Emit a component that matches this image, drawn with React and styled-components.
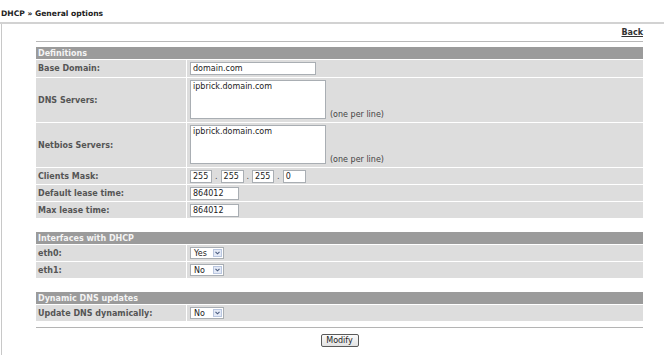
import React from 'react'
import styled, { createGlobalStyle } from 'styled-components'

const GlobalStyle = createGlobalStyle`
  html, body {
    margin: 0;
    padding: 0;
    background: #ffffff;
  }
  body {
    font-family: "DejaVu Sans", Verdana, sans-serif;
    font-size: 8px;
    color: #333333;
  }
`;

const Page = styled.div`
  width: 664px;
  height: 355px;
  overflow: hidden;
`;

const Title = styled.h1`
  margin: 0;
  height: 22px;
  padding: 9px 0 0 1px;
  box-sizing: border-box;
  font-size: 7.6px;
  font-weight: bold;
  color: #222222;
`;

const Frame = styled.div`
  border-top: 2px solid #d2d2d2;
`;

const Content = styled.div`
  margin-left: 1px;
  border-left: 1px solid #c8c8c8;
  padding: 0 21px 20px 34px;
  display: flex;
  flex-direction: column;
`;

const BackBar = styled.div`
  display: flex;
  justify-content: flex-end;
  align-items: center;
  height: 17px;
  border-bottom: 1px solid #b8b8b8;
`;

const BackLink = styled.a`
  font-weight: bold;
  color: #333333;
  text-decoration: underline;
  cursor: pointer;
`;

const Section = styled.div`
  display: grid;
  grid-template-columns: 150px 1fr;
  gap: 1px;
  margin-top: ${({ $top }) => $top}px;
`;

const Header = styled.div`
  grid-column: 1 / -1;
  height: 12px;
  background: #9b9b9b;
  color: #f4f4f4;
  font-weight: bold;
  padding-left: 2px;
  display: flex;
  align-items: center;
`;

const Label = styled.div`
  background: #dddddd;
  height: ${({ $h }) => $h}px;
  padding-left: 2px;
  display: flex;
  align-items: center;
  font-weight: bold;
  color: #555555;
`;

const Value = styled.div`
  background: #dddddd;
  height: ${({ $h }) => $h}px;
  padding-left: 3px;
  display: flex;
  align-items: ${({ $tall }) => ($tall ? 'flex-start' : 'center')};
  padding-top: ${({ $tall }) => ($tall ? 2 : 0)}px;
  box-sizing: border-box;
  gap: 4px;
`;

const MaskGroup = styled.div`
  display: flex;
  align-items: center;
`;

const TextInput = styled.div`
  width: ${({ $w }) => $w}px;
  height: 13px;
  box-sizing: border-box;
  background: #ffffff;
  border: 1px solid #a9aeb3;
  font-size: 8px;
  color: #222222;
  padding-left: 2px;
  display: flex;
  align-items: center;
  white-space: nowrap;
  overflow: hidden;
`;

const TextArea = styled.div`
  width: 136px;
  height: 39px;
  box-sizing: border-box;
  background: #ffffff;
  border: 1px solid #a9aeb3;
  font-size: 8px;
  color: #222222;
  padding: 1px 2px;
`;

const Hint = styled.span`
  align-self: flex-end;
  margin-bottom: 3px;
  font-size: 8px;
  color: #444444;
`;

const Dot = styled.span`
  color: #444444;
  margin: 0 3px;
`;

const SelectBox = styled.div`
  width: 34px;
  height: 12px;
  box-sizing: border-box;
  background: #ffffff;
  border: 1px solid #a9aeb3;
  display: flex;
  align-items: center;
  justify-content: space-between;
  padding: 0 1px 0 3px;
  font-size: 8px;
  color: #222222;
`;

const SelectArrow = styled.span`
  width: 9px;
  height: 8px;
  box-sizing: border-box;
  background: #e3e9f6;
  border: 1px solid #b9c6df;
  display: flex;
  align-items: center;
  justify-content: center;
`;

const Divider = styled.div`
  margin-top: 6px;
  border-top: 1px solid #b4b4b4;
`;

const Actions = styled.div`
  display: flex;
  justify-content: center;
  padding-top: 6px;
`;

const Button = styled.button`
  width: 38px;
  height: 13px;
  padding: 0;
  border: 1px solid #5a5a5a;
  border-radius: 2px;
  background: linear-gradient(#fbfbfb, #e2e2e2);
  font-family: inherit;
  font-size: 8px;
  color: #222222;
  line-height: 10px;
  cursor: pointer;
`;

const Select = ({ value }) => (
  <SelectBox>
    {value}
    <SelectArrow>
      <svg width="5" height="4" viewBox="0 0 5 4">
        <path d="M0.5 0.8 L2.5 2.8 L4.5 0.8" fill="none" stroke="#4b5d80" strokeWidth="1.1" />
      </svg>
    </SelectArrow>
  </SelectBox>
);

const App = () => {
  return (
    <Page>
      <GlobalStyle />
      <Title>DHCP » General options</Title>
      <Frame>
        <Content>
          <BackBar>
            <BackLink>Back</BackLink>
          </BackBar>

          <Section $top={5}>
            <Header>Definitions</Header>
            <Label $h={17}>Base Domain:</Label>
            <Value $h={17}>
              <TextInput $w={126}>domain.com</TextInput>
            </Value>
            <Label $h={44}>DNS Servers:</Label>
            <Value $h={44} $tall>
              <TextArea>ipbrick.domain.com</TextArea>
              <Hint>(one per line)</Hint>
            </Value>
            <Label $h={44}>Netbios Servers:</Label>
            <Value $h={44} $tall>
              <TextArea>ipbrick.domain.com</TextArea>
              <Hint>(one per line)</Hint>
            </Value>
            <Label $h={16}>Clients Mask:</Label>
            <Value $h={16}>
              <MaskGroup>
                <TextInput $w={22}>255</TextInput>
                <Dot>.</Dot>
                <TextInput $w={23}>255</TextInput>
                <Dot>.</Dot>
                <TextInput $w={22}>255</TextInput>
                <Dot>.</Dot>
                <TextInput $w={23}>0</TextInput>
              </MaskGroup>
            </Value>
            <Label $h={16}>Default lease time:</Label>
            <Value $h={16}>
              <TextInput $w={49}>864012</TextInput>
            </Value>
            <Label $h={16}>Max lease time:</Label>
            <Value $h={16}>
              <TextInput $w={49}>864012</TextInput>
            </Value>
          </Section>

          <Section $top={14}>
            <Header>Interfaces with DHCP</Header>
            <Label $h={16}>eth0:</Label>
            <Value $h={16}>
              <Select value="Yes" />
            </Value>
            <Label $h={16}>eth1:</Label>
            <Value $h={16}>
              <Select value="No" />
            </Value>
          </Section>

          <Section $top={14}>
            <Header>Dynamic DNS updates</Header>
            <Label $h={16}>Update DNS dynamically:</Label>
            <Value $h={16}>
              <Select value="No" />
            </Value>
          </Section>

          <Divider />
          <Actions>
            <Button>Modify</Button>
          </Actions>
        </Content>
      </Frame>
    </Page>
  )
}

export default App
